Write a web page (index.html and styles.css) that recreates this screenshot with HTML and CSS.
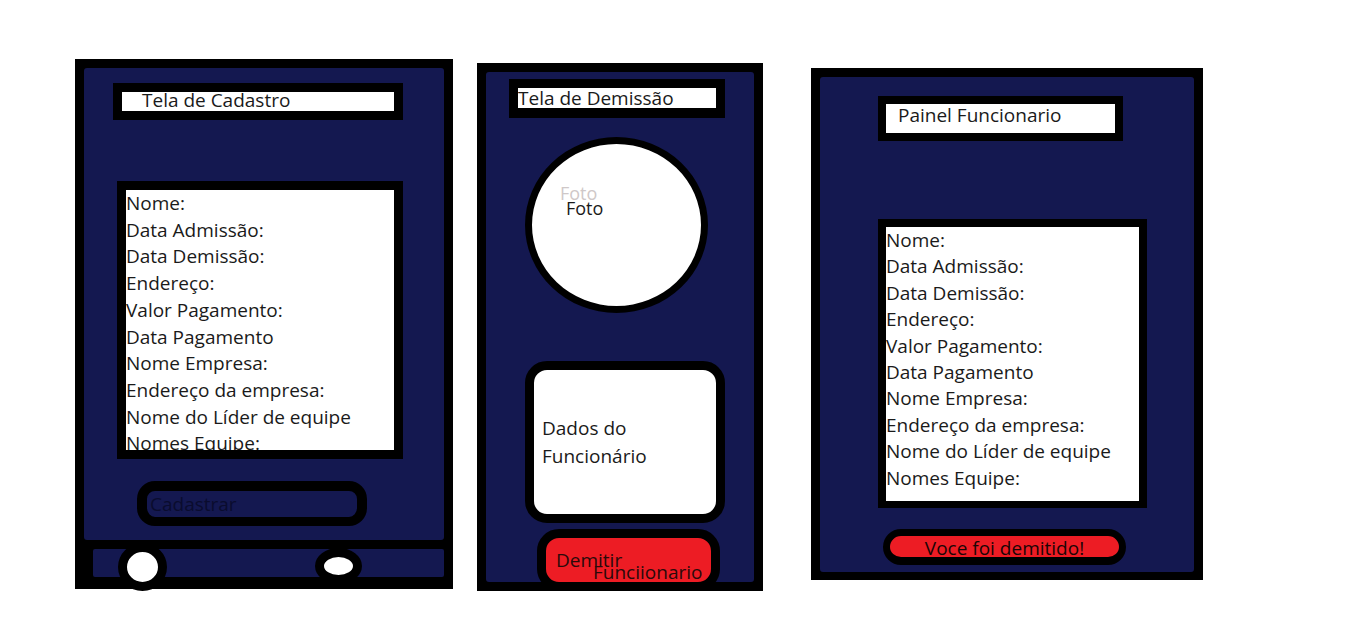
FILE: index.html
```html
<!DOCTYPE html>
<html lang="pt-BR">
<head>
    <meta charset="UTF-8">
    <meta name="viewport" content="width=device-width, initial-scale=1.0">
    <title>Telas do Funcionario</title>
    <link rel="stylesheet" href="styles.css">
</head>
<body>
    <div class="board">
        <!-- Tela de cadastro -->
        <section class="screen screen-cadastro">
            <div class="screen-body">
                <div class="title-box cadastro-title">Tela de Cadastro</div>
                <div class="fields-box cadastro-fields">
                    <p>Nome:</p>
                    <p>Data Admissão:</p>
                    <p>Data Demissão:</p>
                    <p>Endereço:</p>
                    <p>Valor Pagamento:</p>
                    <p>Data Pagamento</p>
                    <p>Nome Empresa:</p>
                    <p>Endereço da empresa:</p>
                    <p>Nome do Líder de equipe</p>
                    <p>Nomes Equipe:</p>
                </div>
                <div class="cadastro-btn">Cadastrar</div>
            </div>
            <div class="nav-bar">
                <span class="nav-dot dot-left"></span>
                <span class="nav-dot dot-right"></span>
            </div>
        </section>

        <!-- Tela de demissao -->
        <section class="screen screen-demissao">
            <div class="screen-body">
                <div class="title-box demissao-title">Tela de Demissão</div>
                <div class="photo">
                    <span class="photo-ghost">Foto</span>
                    <span class="photo-label">Foto</span>
                </div>
                <div class="dados-box">
                    <p>Dados do</p>
                    <p>Funcionário</p>
                </div>
                <div class="demitir-btn">
                    <span class="demitir-first">Demitir</span>
                    <span class="demitir-second">Funciionario</span>
                </div>
            </div>
        </section>

        <!-- Painel do funcionario -->
        <section class="screen screen-painel">
            <div class="screen-body">
                <div class="title-box painel-title">Painel Funcionario</div>
                <div class="fields-box painel-fields">
                    <p>Nome:</p>
                    <p>Data Admissão:</p>
                    <p>Data Demissão:</p>
                    <p>Endereço:</p>
                    <p>Valor Pagamento:</p>
                    <p>Data Pagamento</p>
                    <p>Nome Empresa:</p>
                    <p>Endereço da empresa:</p>
                    <p>Nome do Líder de equipe</p>
                    <p>Nomes Equipe:</p>
                </div>
                <div class="aviso-btn">Voce foi demitido!</div>
            </div>
        </section>
    </div>
</body>
</html>
```

FILE: styles.css
```css
* {
    box-sizing: border-box;
}
body {
    margin: 0;
    background-color: #ffffff;
    font-family: 'Open Sans', 'Noto Sans', sans-serif;
    font-size: 19px;
    color: #1a1a1a;
}
p {
    margin: 0;
}
.board {
    display: flex;
    align-items: flex-start;
    padding-left: 75px;
}
.screen {
    background-color: #000;
    padding: 9px;
}
.screen-body {
    background-color: #141850;
    border-radius: 3px;
    display: flex;
    flex-direction: column;
    align-items: flex-start;
}
.screen-body > * {
    flex-shrink: 0;
}
.title-box {
    background-color: #fff;
    border: 9px solid #000;
    white-space: nowrap;
}
.fields-box {
    background-color: #fff;
    border: 9px solid #000;
    overflow: hidden;
    white-space: nowrap;
}

/* tela de cadastro */
.screen-cadastro {
    margin-top: 59px;
    width: 378px;
    height: 530px;
    padding-bottom: 12px;
}
.screen-cadastro .screen-body {
    height: 472px;
    padding-top: 15px;
}
.cadastro-title {
    margin-left: 29px;
    width: 290px;
    height: 37px;
    padding-left: 20px;
    line-height: 17px;
}
.cadastro-fields {
    margin-top: 61px;
    margin-left: 33px;
    width: 286px;
    height: 278px;
    line-height: 26.7px;
}
.cadastro-btn {
    margin-top: 22px;
    margin-left: 53px;
    width: 230px;
    height: 45px;
    border: 10px solid #000;
    border-bottom-width: 9px;
    border-radius: 18px;
    padding-left: 3px;
    line-height: 26px;
    color: #0a0c2e;
}
.nav-bar {
    position: relative;
    margin-top: 9px;
    margin-left: 9px;
    height: 28px;
    background-color: #141850;
    border-radius: 2px;
}
.nav-dot {
    position: absolute;
    background-color: #fff;
    border: 9px solid #000;
    border-radius: 50%;
}
.dot-left {
    left: 25px;
    top: -6px;
    width: 49px;
    height: 48px;
}
.dot-right {
    left: 222px;
    top: -1px;
    width: 47px;
    height: 36px;
}

/* tela de demissao */
.screen-demissao {
    margin-top: 63px;
    margin-left: 24px;
    width: 286px;
    height: 528px;
}
.screen-demissao .screen-body {
    height: 510px;
    padding-top: 7px;
}
.demissao-title {
    margin-left: 23px;
    width: 216px;
    height: 39px;
    border-bottom-width: 10px;
    line-height: 20px;
}
.photo {
    margin-top: 19px;
    margin-left: 39px;
    width: 183px;
    height: 176px;
    border: 7px solid #000;
    border-radius: 50%;
    background-color: #fff;
    padding: 42px 0 0 28px;
    display: flex;
    flex-direction: column;
    align-items: flex-start;
}
.photo-ghost {
    color: #cfc8c8;
    font-size: 18px;
    line-height: 15px;
}
.photo-label {
    margin-left: 6px;
    font-size: 18px;
    line-height: 15px;
}
.dados-box {
    margin-top: 48px;
    margin-left: 39px;
    width: 200px;
    height: 162px;
    border: 9px solid #000;
    border-radius: 22px;
    background-color: #fff;
    padding-left: 8px;
    display: flex;
    flex-direction: column;
    justify-content: center;
    line-height: 28px;
}
.demitir-btn {
    margin-top: 6px;
    margin-left: 51px;
    width: 183px;
    height: 62px;
    border: 9px solid #000;
    border-radius: 22px;
    background-color: #ed1c24;
    padding: 16px 0 0 10px;
    display: flex;
    flex-direction: column;
    align-items: flex-start;
    color: #2a0a0a;
}
.demitir-first {
    line-height: 12px;
}
.demitir-second {
    margin-left: 37px;
    line-height: 12px;
}

/* painel funcionario */
.screen-painel {
    margin-top: 68px;
    margin-left: 48px;
    width: 392px;
    height: 512px;
}
.screen-painel .screen-body {
    height: 495px;
    padding-top: 19px;
}
.painel-title {
    margin-left: 58px;
    width: 245px;
    height: 45px;
    border-width: 8px;
    padding-left: 12px;
    line-height: 22px;
}
.painel-fields {
    margin-top: 78px;
    margin-left: 58px;
    width: 269px;
    height: 289px;
    border-width: 8px 8px 7px;
    line-height: 26.4px;
}
.aviso-btn {
    margin-top: 21px;
    margin-left: 63px;
    width: 243px;
    height: 36px;
    border: 7px solid #000;
    border-bottom-width: 8px;
    border-radius: 18px;
    background-color: #ed1c24;
    text-align: center;
    line-height: 24px;
    white-space: nowrap;
    overflow: hidden;
    color: #1a0505;
}
```
